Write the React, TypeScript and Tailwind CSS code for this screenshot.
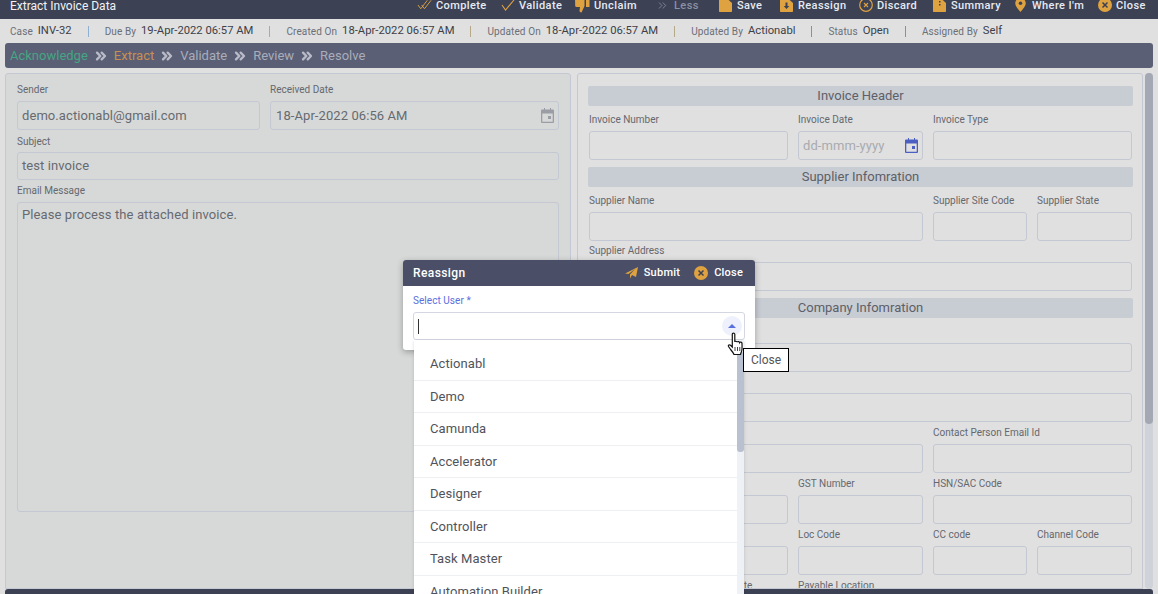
import { Fragment, ReactNode } from 'react'
import { ChevronsRight } from 'lucide-react'

const amber = '#dfa240'
const bar = '#3c4154'

const IconCheckDouble = () => (
  <svg width="16" height="12" viewBox="0 0 16 12" fill="none" stroke={amber} strokeWidth="1">
    <path d="M1 6l3 4 7-9M5 6l3 4 7-9" />
  </svg>
)
const IconCheck = () => (
  <svg width="14" height="12" viewBox="0 0 14 12" fill="none" stroke={amber} strokeWidth="1.1">
    <path d="M1 6l3.500 5L13 1" />
  </svg>
)
const IconThumb = () => (
  <svg width="15" height="15" viewBox="0 0 15 15" fill={amber}>
    <path d="M0 0h8c1 0 1.500.5 1.500 1.500V8l-3 6.500c-1.300 0-2-.8-2-2l.5-3.500H1.500C.5 9 0 8.300.2 7.500zM11 0h3.500v9H11z" />
  </svg>
)
const IconFile = ({ mark }: { mark?: 'down' | 'dots' }) => (
  <svg width="13" height="14" viewBox="0 0 13 14" fill={amber}>
    <path d="M0 0h7.500L13 5v8c0 .6-.4 1-1 1H1c-.6 0-1-.4-1-1z" />
    {mark === 'down' && <path d="M5.500 4.500h2v3.500h1.800l-2.800 3-2.800-3h1.800z" fill={bar} />}
    {mark === 'dots' && <path d="M6 3h1.500v1.500H6zM6 6h1.500v1.500H6z" fill={bar} />}
  </svg>
)
const IconDiscard = () => (
  <svg width="14" height="14" viewBox="0 0 14 14" fill="none" stroke={amber}>
    <circle cx="7" cy="7" r="6.300" strokeWidth="1.200" />
    <path d="M5 5l4 4M9 5l-4 4" strokeWidth="1.100" />
  </svg>
)
const IconPin = () => (
  <svg width="11" height="14" viewBox="0 0 12 16">
    <path d="M6 0a6 6 0 0 1 6 6c0 3.500-4 7.500-6 10C4 13.500 0 9.500 0 6a6 6 0 0 1 6-6z" fill={amber} />
    <circle cx="6" cy="6" r="2" fill={bar} />
  </svg>
)
const IconClose = () => (
  <svg width="14" height="14" viewBox="0 0 14 14">
    <circle cx="7" cy="7" r="7" fill={amber} />
    <path d="M4.500 4.500l5 5M9.500 4.500l-5 5" stroke={bar} strokeWidth="1.500" />
  </svg>
)
const IconSend = () => (
  <svg width="13" height="12" viewBox="0 0 13 12" fill={amber}>
    <path d="M0 6.500L13 0l-2 10-4-2-2 3.500V7.500L10 2 3.500 7z" />
  </svg>
)
const IconCalendar = ({ color }: { color: string }) => (
  <svg width="13" height="15" viewBox="0 0 13 15" fill={color}>
    <path d="M3 0h1v2H3zM9 0h1v2H9z" />
    <path fillRule="evenodd" d="M1 1.500h11a1 1 0 0 1 1 1V14a1 1 0 0 1-1 1H1a1 1 0 0 1-1-1V2.500a1 1 0 0 1 1-1zM1.300 5.500v8.200h10.400V5.500z" />
    <path d="M7 8h3v3H7z" />
  </svg>
)

const HandCursor = () => (
  <svg width="19" height="24" viewBox="0 0 18 24" fill="#fff" stroke="#111" strokeWidth="1.200">
    <path d="M5 1.500c1-.8 2.300-.3 2.300 1V10c.2-1 2.200-1 2.400.2.300-1 2.200-.9 2.400.4.400-.8 2.200-.6 2.400.8 0 3 .3 5.500-.3 7.500-.3 1.300-1 2.300-1.200 3.600H6.500c-.5-1.600-2-3.300-3.400-5L1 14.500c-.7-1.300.8-2.300 2-1.200l1.800 1.700V2.500c0-.3 0-.7.200-1z" />
    <path d="M7.500 15v4M10 15v4M12.300 15v4" strokeWidth="0.800" />
  </svg>
)

const actions: { icon: ReactNode; label: string; className: string; muted?: boolean }[] = [
  { icon: <IconCheckDouble />, label: 'Complete', className: 'w-[83px]' },
  { icon: <IconCheck />, label: 'Validate', className: 'w-[75px]' },
  { icon: <IconThumb />, label: 'Unclaim', className: 'w-[80px]' },
  { icon: <ChevronsRight size={13} strokeWidth={1.500} color="#8b90a3" />, label: 'Less', className: 'w-[63px]', muted: true },
  { icon: <IconFile />, label: 'Save', className: 'w-[61px]' },
  { icon: <IconFile mark="down" />, label: 'Reassign', className: 'w-[79px]' },
  { icon: <IconDiscard />, label: 'Discard', className: 'w-[74px]' },
  { icon: <IconFile mark="dots" />, label: 'Summary', className: 'w-[81px]' },
  { icon: <IconPin />, label: "Where I'm", className: 'w-[84px]' },
  { icon: <IconClose />, label: 'Close', className: 'w-[50px]' },
]

const meta = [
  { label: 'Case', value: 'INV-32', sep: 'border-[#8fb0cf]' },
  { label: 'Due By', value: '19-Apr-2022 06:57 AM', sep: 'border-[#8fb0cf]' },
  { label: 'Created On', value: '18-Apr-2022 06:57 AM', sep: 'border-[#b5a98a]' },
  { label: 'Updated On', value: '18-Apr-2022 06:57 AM', sep: 'border-[#b5a98a]' },
  { label: 'Updated By', value: 'Actionabl', sep: 'border-[#8a8f98]' },
  { label: 'Status', value: 'Open', sep: 'border-[#8a8f98]' },
  { label: 'Assigned By', value: 'Self' },
]

const Field = ({ label, className = '', children }: { label?: string; className?: string; children?: ReactNode }) => (
  <div className={`min-w-0 ${className}`}>
    <div className="h-[14px] text-[10px] leading-[16px] text-[#65686f] whitespace-nowrap">{label}</div>
    <div className="mt-[5px] h-[29px] rounded-[3px] border border-[#c4c8d2] flex items-center justify-between pl-[4px] pr-[4px] text-[13px] tracking-[0.08px] text-[#666a70]">
      {children}
    </div>
  </div>
)

const SectionTitle = ({ children }: { children: ReactNode }) => (
  <div className="h-5 rounded-[2px] bg-[#c8ccd3] text-center text-[13px] leading-5 text-[#5d6068]">{children}</div>
)

const Stage = ({ className, children, last }: { className?: string; children: ReactNode; last?: boolean }) => (
  <>
    <span className={className}>{children}</span>
    {!last && <ChevronsRight size={16} strokeWidth={3.500} className="mx-[5px]" color="#b9bcc8" />}
  </>
)

const users = ['Actionabl', 'Demo', 'Camunda', 'Accelerator', 'Designer', 'Controller', 'Task Master', 'Automation Builder']

export default function App() {
  return (
    <div className="relative h-[594px] w-[1158px] overflow-hidden bg-[#e0e0e0] font-['Roboto',sans-serif]">
      {/* Title bar */}
      <header className="h-[19px] bg-[#3c4154] flex items-start pl-[10px] text-white overflow-hidden">
        <h1 className="text-[12px] leading-[13px] text-[#f2f2f4] font-normal">Extract Invoice Data</h1>
        <div className="ml-auto flex items-start pr-[11px] -mt-px">
          {actions.map((a) => (
            <div key={a.label} className={`flex items-center h-[14px] ${a.className}`}>
              <span className="w-[15px] flex justify-center shrink-0 -translate-y-px">{a.icon}</span>
              <span className={`ml-[4px] text-[11px] font-medium tracking-[0.4px] whitespace-nowrap ${a.muted ? 'text-[#8b90a3]' : 'text-[#e6ebf3]'}`}>{a.label}</span>
            </div>
          ))}
        </div>
      </header>

      {/* Task info */}
      <div className="h-[24px] pl-[10px] flex items-center gap-[16px]">
        {meta.map((m) => (
          <Fragment key={m.label}>
            <div className="flex items-center shrink-0">
              <span className="text-[10px] tracking-[0.1px] text-[#6b6f78]">{m.label}</span>
              <span className="ml-[5px] text-[11.25px] text-[#3d4048] whitespace-nowrap">{m.value}</span>
            </div>
            {m.sep && <span className={`h-[11px] border-l ${m.sep}`} />}
          </Fragment>
        ))}
      </div>

      {/* Stages */}
      <nav className="mx-[5px] h-[25px] rounded-[3px] bg-[#5a5f75] flex items-center pl-[5px] text-[13px] text-[#a9adbb]">
        <Stage className="text-[#45a584]">Acknowledge</Stage>
        <Stage className="text-[#c98f52]">Extract</Stage>
        <Stage>Validate</Stage>
        <Stage>Review</Stage>
        <Stage last>Resolve</Stage>
      </nav>

      <div className="mt-[5px] mx-[5px] h-[516px] flex items-stretch">
        {/* Email panel */}
        <section className="w-[566px] shrink-0 rounded-t-[3px] border border-[#c4c8d2] bg-[#d7d9d8] px-[11px] pt-[8px] flex flex-col">
          <div className="flex gap-[10px]">
            <Field label="Sender" className="w-[243px]">demo.actionabl@gmail.com</Field>
            <Field label="Received Date" className="flex-1">
              <span className="ml-px">18-Apr-2022 06:56 AM</span>
              <IconCalendar color="#9a9da3" />
            </Field>
          </div>
          <div className="mt-[4px] h-[14px] text-[10px] leading-[16px] text-[#65686f]">Subject</div>
          <div className="mt-[4px] h-[28px] rounded-[3px] border border-[#c4c8d2] flex items-center pl-[4px] text-[13px] tracking-[0.08px] text-[#666a70]">test invoice</div>
          <div className="mt-[3px] h-[14px] text-[10px] leading-[16px] text-[#65686f]">Email Message</div>
          <div className="mt-[5px] h-[310px] rounded-[3px] border border-[#c4c8d2] p-[4px] text-[13px] tracking-[0.1px] leading-4 text-[#666a70]">
            Please process the attached invoice.
          </div>
        </section>

        {/* Invoice form */}
        <section className="ml-[6px] w-[566px] shrink-0 rounded-t-[3px] border border-[#c4c8d2] overflow-hidden pl-[10px] pr-[9px] pt-[12px]">
          <SectionTitle>Invoice Header</SectionTitle>
          <div className="mt-[6px] ml-px grid grid-cols-[199px_125px_94px_95px] gap-x-[10px]">
            <Field label="Invoice Number" />
            <Field label="Invoice Date">
              <span className="text-[#a8abb0]">dd-mmm-yyyy</span>
              <IconCalendar color="#4a5fc1" />
            </Field>
            <Field label="Invoice Type" className="col-span-2" />
          </div>
          <div className="mt-[7px]"><SectionTitle>Supplier Infomration</SectionTitle></div>
          <div className="mt-[6px] ml-px grid grid-cols-[199px_125px_94px_95px] gap-x-[10px] gap-y-[2px]">
            <Field label="Supplier Name" className="col-span-2" />
            <Field label="Supplier Site Code" />
            <Field label="Supplier State" />
            <Field label="Supplier Address" className="col-span-4" />
          </div>
          <div className="mt-[7px]"><SectionTitle>Company Infomration</SectionTitle></div>
          <div className="mt-[6px] ml-px grid grid-cols-[199px_125px_94px_95px] gap-x-[10px] gap-y-[2px]">
            <Field label="Company Name" className="col-span-4" />
            <Field label="Company Address" className="col-span-4" />
          </div>
          <div className="mt-[3px] ml-px grid grid-cols-[199px_125px_94px_95px] gap-x-[10px] gap-y-[3px]">
            <Field label="Contact Person Name" className="col-span-2" />
            <Field label="Contact Person Email Id" className="col-span-2" />
            <Field label="PAN Number" />
            <Field label="GST Number" />
            <Field label="HSN/SAC Code" className="col-span-2" />
            <Field label="Bank Code" />
            <Field label="Loc Code" />
            <Field label="CC code" />
            <Field label="Channel Code" />
            <div className="flex gap-[10px]">
              <Field label="Due Date" className="w-[91px]" />
              <Field label="Payment Date" className="flex-1" />
            </div>
            <Field label="Payable Location" />
          </div>
        </section>

        {/* Page scrollbar */}
        <div className="ml-[2px] w-[8px] rounded-[4px] bg-[#cfd2d8]">
          <div className="h-[351px] rounded-[4px] bg-[#a3a8b4]" />
        </div>
      </div>

      {/* Footer bar, cut by the window */}
      <div className="mx-[5px] h-[8px] rounded-t-[3px] bg-[#3c4154]" />

      {/* Reassign dialog */}
      <div className="absolute left-[403px] top-[260px] w-[352px] h-[90px] rounded-[3px] bg-white shadow-[0_2px_6px_rgba(0,0,0,0.3)]">
        <div className="h-[26px] rounded-t-[3px] bg-[#4a4f67] flex items-center pl-[10px] pr-[12px] text-white">
          <span className="text-[12px] font-medium tracking-[0.4px]">Reassign</span>
          <span className="ml-auto flex items-center gap-[6px] text-[11px] font-medium tracking-[0.25px]">
            <IconSend />
            Submit
          </span>
          <span className="ml-[14px] flex items-center gap-[6px] text-[11px] font-medium tracking-[0.2px]">
            <IconClose />
            Close
          </span>
        </div>
        <div className="px-[10px] pt-[9px]">
          <div className="text-[10px] leading-[12px] tracking-[0.05px] text-[#5a6fe0]">Select User *</div>
          <div className="mt-[5px] h-[28px] w-[332px] rounded-[3px] border border-[#d4d7e2] flex items-center pl-[4px] pr-[2px]">
            <span className="h-[15px] border-l border-[#333]" />
            <span className="ml-auto w-[20px] h-[20px] rounded-full bg-[#eef1fb] flex items-center justify-center">
              <span className="border-x-[4px] border-x-transparent border-b-[4px] border-b-[#5a6fe0]" />
            </span>
          </div>
        </div>
      </div>

      {/* Select options */}
      <div className="absolute left-[414px] top-[340px] w-[330px] h-[254px] bg-white flex overflow-hidden shadow-[0_1px_3px_rgba(0,0,0,0.15)]">
        <ul className="flex-1 pt-[8px]">
          {users.map((u) => (
            <li key={u} className="h-[32.5px] pl-[16px] flex items-center border-b border-[#eeeff2] text-[13px] tracking-[0.08px] text-[#50535b]">{u}</li>
          ))}
        </ul>
        <div className="w-[7px] bg-[#eef1f6]">
          <div className="mt-[12px] h-[100px] rounded-[3px] bg-[#b9c0cf]" />
        </div>
      </div>

      {/* Pointer and tooltip */}
      <div className="absolute left-[743px] top-[348px] h-[24px] w-[46px] border border-black bg-white text-center text-[12px] leading-[22px] text-[#555]">Close</div>
      <div className="absolute left-[727px] top-[332px]"><HandCursor /></div>
    </div>
  )
}
